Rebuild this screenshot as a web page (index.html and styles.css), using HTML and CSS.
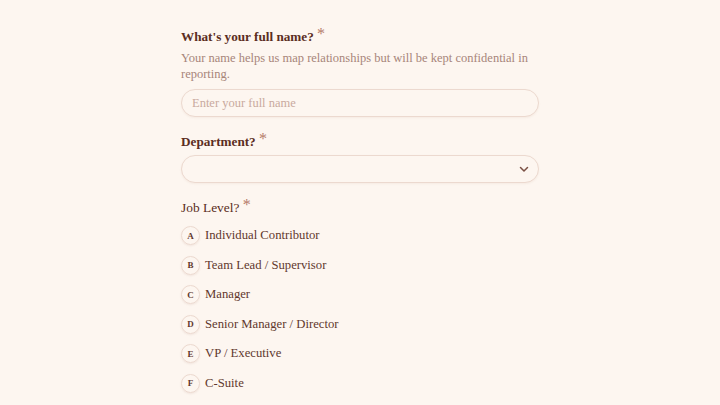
FILE: index.html
```html
<!DOCTYPE html>
<html lang="en">

<head>
    <meta charset="UTF-8">
    <meta name="viewport" content="width=device-width, initial-scale=1.0">
    <title>Team Survey</title>
    <link rel="stylesheet" href="styles.css">
</head>

<body>
    <form class="survey">
        <div class="question">
            <label class="q-title" for="fullName">What's your full name? <span class="req">*</span></label>
            <p class="q-help">Your name helps us map relationships but will be kept confidential in reporting.</p>
            <input type="text" id="fullName" class="field" placeholder="Enter your full name">
        </div>

        <div class="question">
            <label class="q-title" for="department">Department? <span class="req">*</span></label>
            <div class="select-wrap">
                <select id="department" class="field">
                    <option value=""></option>
                </select>
                <svg class="chevron" width="12" height="12" viewBox="0 0 12 12" fill="none">
                    <path d="M2.5 4.5 6 8l3.5-3.5" stroke="currentColor" stroke-width="1.5" stroke-linecap="round" stroke-linejoin="round" />
                </svg>
            </div>
        </div>

        <div class="question">
            <div class="q-title q-plain">Job Level? <span class="req">*</span></div>
            <ul class="choices">
                <li class="choice"><span class="key">A</span>Individual Contributor</li>
                <li class="choice"><span class="key">B</span>Team Lead / Supervisor</li>
                <li class="choice"><span class="key">C</span>Manager</li>
                <li class="choice"><span class="key">D</span>Senior Manager / Director</li>
                <li class="choice"><span class="key">E</span>VP / Executive</li>
                <li class="choice"><span class="key">F</span>C-Suite</li>
            </ul>
        </div>
    </form>
</body>

</html>
```

FILE: styles.css
```css
:root {
    --bg: #fdf6f0;
    --ink: #5b2d22;
    --muted: #a7857a;
    --placeholder: #c9aa9e;
    --line: #ecd9cf;
    --accent: #b57a68;
}

* {
    box-sizing: border-box;
    margin: 0;
    padding: 0;
}

body {
    background: var(--bg);
    font-family: 'Liberation Serif', 'Times New Roman', serif;
    color: var(--ink);
    overflow: hidden;
}

.survey {
    width: 358px;
    margin: 0 auto;
    padding-top: 27px;
}

.question {
    margin-bottom: 15px;
}

.q-title {
    display: block;
    font-size: 13.2px;
    font-weight: 700;
    line-height: 20px;
    margin-bottom: 3px;
}

.q-plain {
    font-weight: 400;
    font-size: 13.4px;
}

/* star sits high and must not grow the line */
.req {
    color: var(--accent);
    font-size: 16px;
    font-weight: 400;
    line-height: 0;
    vertical-align: 2px;
}

.q-help {
    font-size: 12.5px;
    line-height: 16px;
    color: var(--muted);
    margin-bottom: 7px;
}

.field {
    display: block;
    width: 100%;
    height: 28px;
    border: 1px solid var(--line);
    border-radius: 14px;
    background: var(--bg);
    padding: 0 10px;
    font-family: inherit;
    font-size: 12.5px;
    color: var(--ink);
    box-shadow: 0 1px 2px rgba(160, 110, 90, 0.08);
    outline: none;
    appearance: none;
}

.field::placeholder {
    color: var(--placeholder);
}

.select-wrap {
    position: relative;
}

.chevron {
    position: absolute;
    right: 9px;
    top: 8px;
    color: #7a5044;
    pointer-events: none;
}

.choices {
    list-style: none;
    margin-top: 1px;
}

.choice {
    display: flex;
    align-items: center;
    gap: 5px;
    height: 29.5px;
    font-size: 12.7px;
    color: #62382d;
}

.key {
    width: 19px;
    height: 19px;
    border-radius: 50%;
    border: 1px solid var(--line);
    display: flex;
    align-items: center;
    justify-content: center;
    font-size: 9px;
    font-weight: 700;
    box-shadow: 0 1px 2px rgba(160, 110, 90, 0.12);
}
```
